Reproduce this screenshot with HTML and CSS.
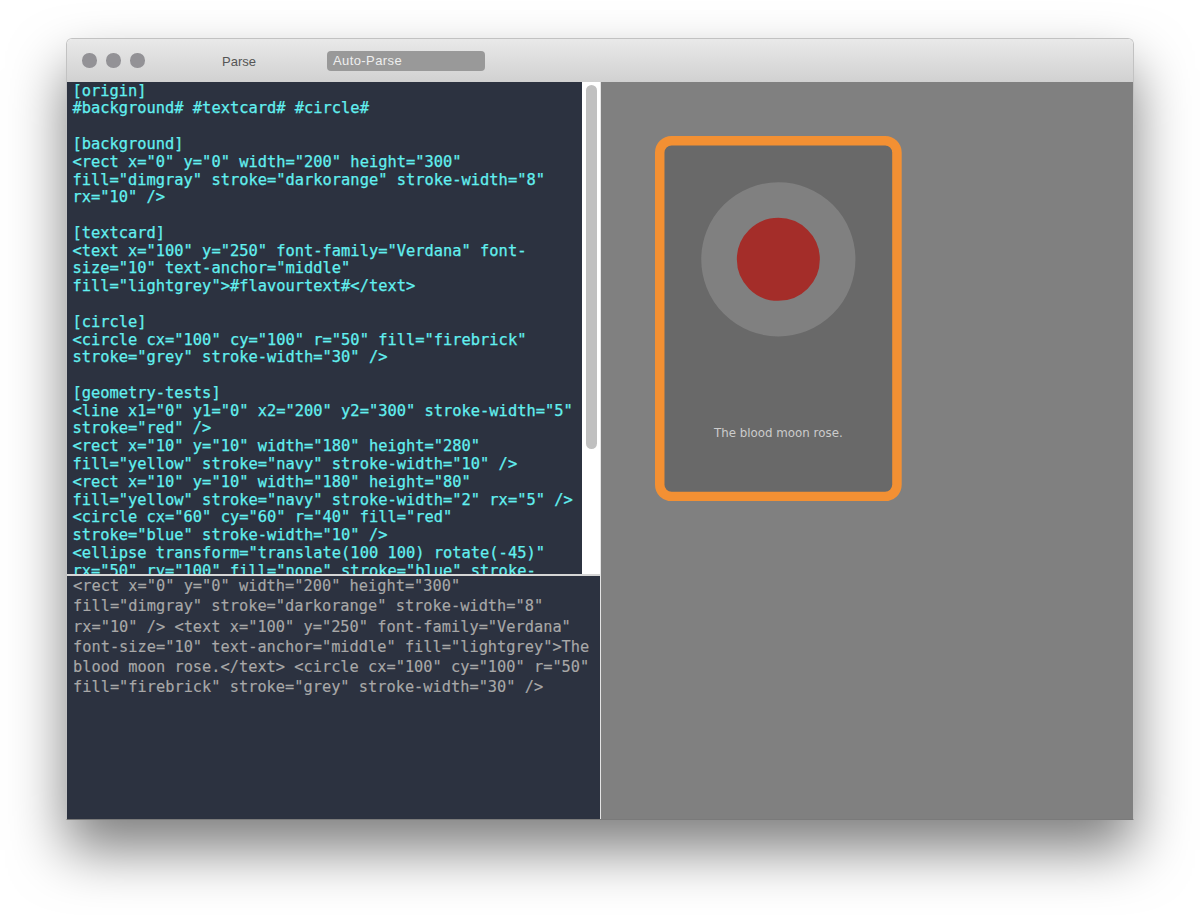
FILE: index.html
```html
<!DOCTYPE html>
<html lang="en">
<head>
    <meta charset="UTF-8">
    <title>Parse</title>
    <link rel="stylesheet" href="styles.css">
</head>
<body>
    <div class="window">
        <div class="titlebar">
            <div class="lights">
                <span class="light"></span>
                <span class="light"></span>
                <span class="light"></span>
            </div>
            <button class="parse">Parse</button>
            <button class="autoParse">Auto-Parse</button>
        </div>
        <div class="main">
            <div class="leftPane">
                <div class="editorRow">
                    <pre class="editor">[origin]
#background# #textcard# #circle#

[background]
&lt;rect x="0" y="0" width="200" height="300"
fill="dimgray" stroke="darkorange" stroke-width="8"
rx="10" /&gt;

[textcard]
&lt;text x="100" y="250" font-family="Verdana" font-
size="10" text-anchor="middle"
fill="lightgrey"&gt;#flavourtext#&lt;/text&gt;

[circle]
&lt;circle cx="100" cy="100" r="50" fill="firebrick"
stroke="grey" stroke-width="30" /&gt;

[geometry-tests]
&lt;line x1="0" y1="0" x2="200" y2="300" stroke-width="5"
stroke="red" /&gt;
&lt;rect x="10" y="10" width="180" height="280"
fill="yellow" stroke="navy" stroke-width="10" /&gt;
&lt;rect x="10" y="10" width="180" height="80"
fill="yellow" stroke="navy" stroke-width="2" rx="5" /&gt;
&lt;circle cx="60" cy="60" r="40" fill="red"
stroke="blue" stroke-width="10" /&gt;
&lt;ellipse transform="translate(100 100) rotate(-45)"
rx="50" ry="100" fill="none" stroke="blue" stroke-</pre>
                    <div class="scrollbar"><div class="thumb"></div></div>
                </div>
                <pre class="output">&lt;rect x="0" y="0" width="200" height="300"
fill="dimgray" stroke="darkorange" stroke-width="8"
rx="10" /&gt; &lt;text x="100" y="250" font-family="Verdana"
font-size="10" text-anchor="middle" fill="lightgrey"&gt;The
blood moon rose.&lt;/text&gt; &lt;circle cx="100" cy="100" r="50"
fill="firebrick" stroke="grey" stroke-width="30" /&gt;</pre>
            </div>
            <div class="preview">
                <svg class="card" viewBox="-4 -4 208 308" xmlns="http://www.w3.org/2000/svg">
                    <rect x="0" y="0" width="200" height="300" fill="#696969" stroke="#f39033" stroke-width="8" rx="10" />
                    <text x="100" y="250" font-family="DejaVu Sans, sans-serif" font-size="10" text-anchor="middle" fill="#cccccc">The blood moon rose.</text>
                    <circle cx="100" cy="100" r="50" fill="#a42d29" stroke="#808080" stroke-width="30" />
                </svg>
            </div>
        </div>
    </div>
</body>
</html>
```

FILE: styles.css
```css
body {
    margin: 0;
    height: 915px;
    overflow: hidden;
    background-color: white;
    font-family: "Liberation Sans", Arial, sans-serif;
}

.window {
    width: 1068px;
    height: 782px;
    box-sizing: border-box;
    margin: 38px 0 0 66px;
    border: 1px solid #c2c2c2;
    border-bottom-color: #7a7a7a;
    border-radius: 6px 6px 0 0;
    overflow: hidden;
    display: flex;
    flex-direction: column;
    box-shadow: 0 30px 55px rgba(0, 0, 0, 0.5);
}

.titlebar {
    height: 43px;
    flex: none;
    display: flex;
    align-items: center;
    background: linear-gradient(#e9e9e9, #d1d1d1);
}

.lights {
    display: flex;
    gap: 9.5px;
    padding-left: 15px;
    width: 137px;
    box-sizing: border-box;
}

.light {
    width: 14.5px;
    height: 14.5px;
    border-radius: 50%;
    background-color: #939296;
}

.parse {
    width: 70px;
    margin-right: 53px;
    border: none;
    background: none;
    padding: 2px 0 0;
    font: 13px "Liberation Sans", Arial, sans-serif;
    color: #555555;
    text-align: center;
}

.autoParse {
    width: 158px;
    height: 20px;
    border: none;
    border-radius: 4px;
    background-color: #999999;
    padding: 0 0 0 6px;
    text-align: left;
    font: 13px "Liberation Sans", Arial, sans-serif;
    letter-spacing: 0.4px;
    color: #eeeeee;
}

.main {
    flex: 1;
    display: flex;
    min-height: 0;
}

.leftPane {
    width: 533px;
    flex: none;
    display: flex;
    flex-direction: column;
    border-right: 1px solid #e4e4e4;
}

.editorRow {
    height: 492px;
    flex: none;
    display: flex;
}

.editor {
    flex: 1;
    margin: 0;
    padding: 0.6px 0 0 5.4px;
    overflow: hidden;
    background-color: #2c3240;
    color: #62f0f0;
    font: 15.4px/17.78px "DejaVu Sans Mono", monospace;
    -webkit-text-stroke: 0.25px #62f0f0;
}

.scrollbar {
    width: 18px;
    flex: none;
    box-sizing: border-box;
    padding: 3px 3px 0 4px;
    background-color: white;
}

.thumb {
    height: 364px;
    border-radius: 6px;
    background-color: #c0c0c0;
}

.output {
    flex: 1;
    margin: 0;
    padding: 0 0 0 6px;
    overflow: hidden;
    background-color: #2c3240;
    border-top: 2px solid #d6d6d6;
    color: #a8a8a8;
    font: 15.32px/20.3px "DejaVu Sans Mono", monospace;
    -webkit-text-stroke: 0.15px #a8a8a8;
}

.preview {
    flex: 1;
    background-color: #808080;
    padding: 54px 0 0 54px;
}

.card {
    display: block;
    width: 246.7px;
    height: 365.3px;
}
```
